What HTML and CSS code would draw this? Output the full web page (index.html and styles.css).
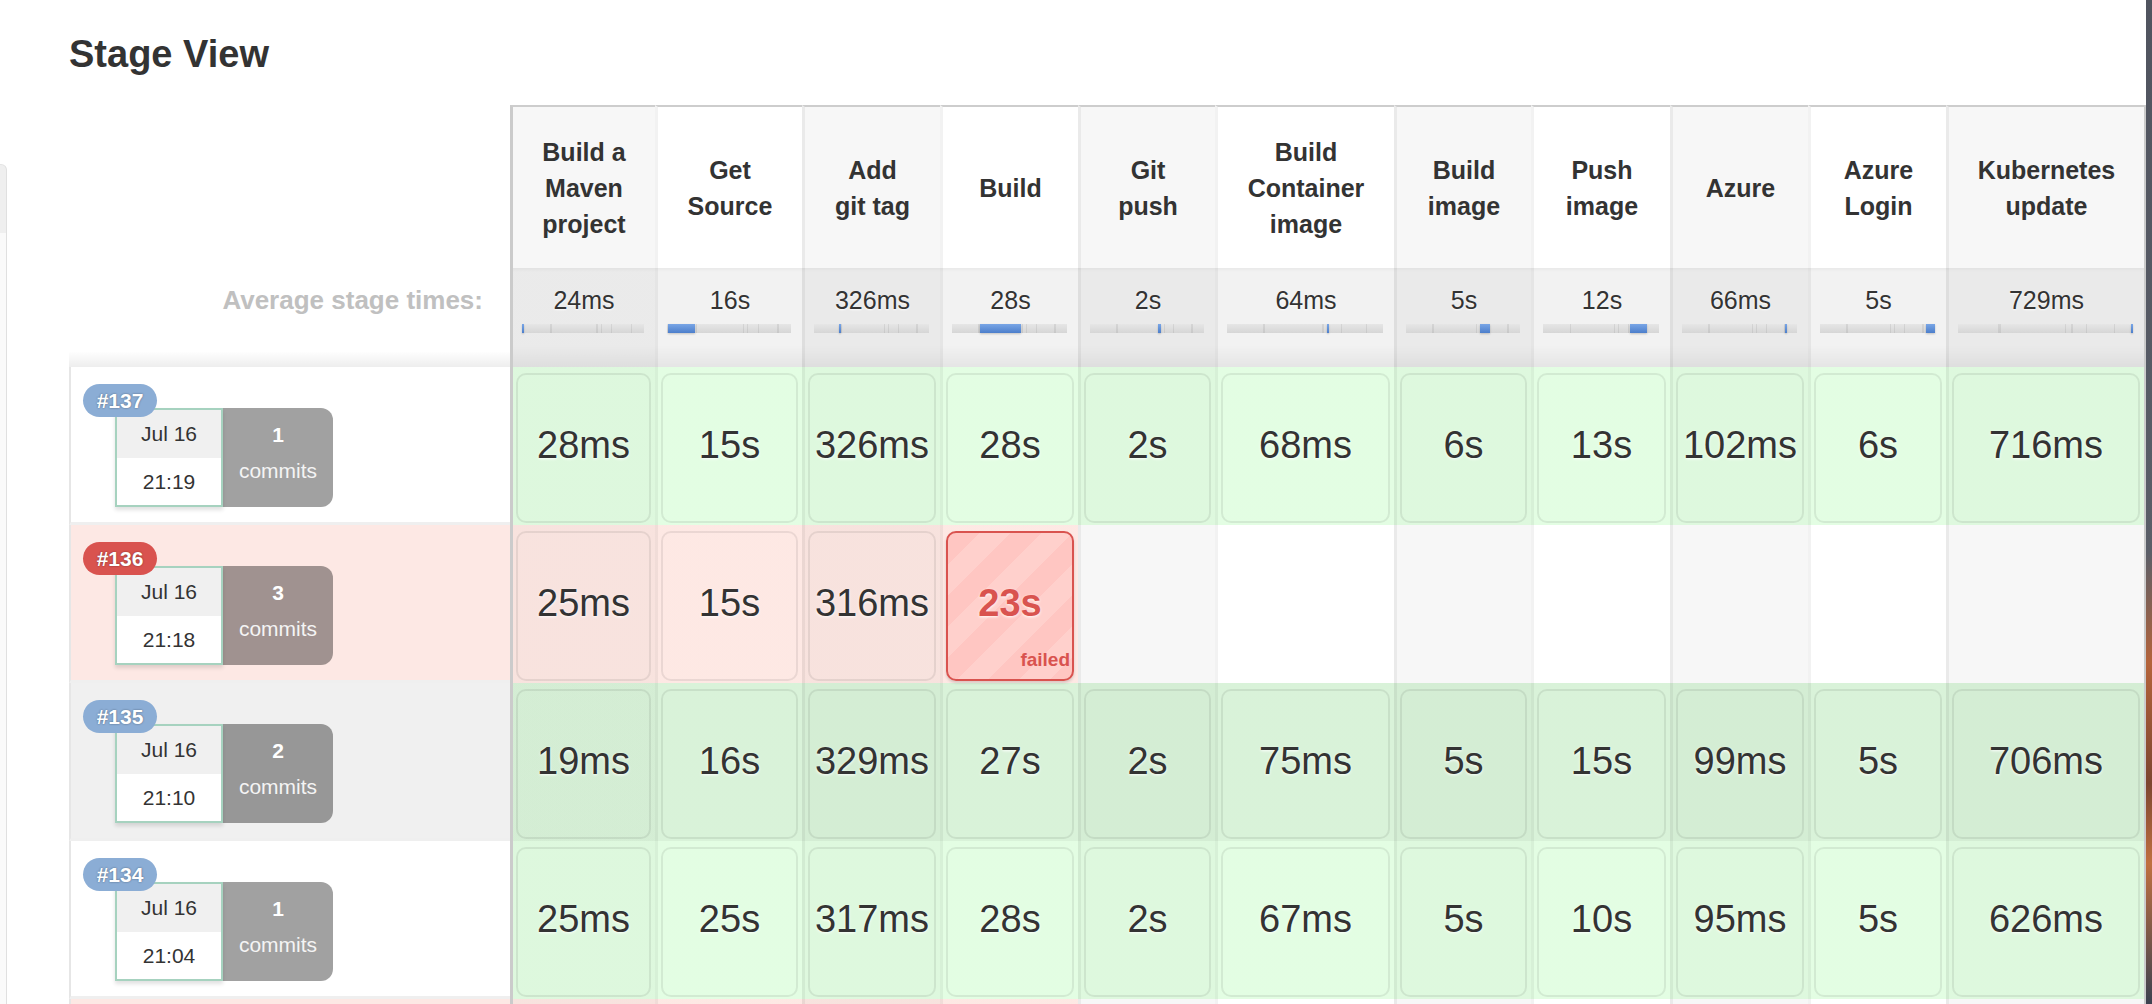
FILE: index.html
```html
<!DOCTYPE html>
<html>
<head>
<meta charset="utf-8">
<title>Stage View</title>
<link rel="stylesheet" href="styles.css">
</head>
<body>
<div class="side"></div>
<main class="main">
  <h2 class="title">Stage View</h2>
  <div class="sv">
    <!-- header row -->
    <div class="lh"></div>
    <div class="hc c1 odd">Build a<br>Maven<br>project</div>
    <div class="hc even">Get<br>Source</div>
    <div class="hc odd">Add<br>git tag</div>
    <div class="hc even">Build</div>
    <div class="hc odd">Git<br>push</div>
    <div class="hc even">Build<br>Container<br>image</div>
    <div class="hc odd">Build<br>image</div>
    <div class="hc even">Push<br>image</div>
    <div class="hc odd">Azure</div>
    <div class="hc even">Azure<br>Login</div>
    <div class="hc odd last">Kubernetes<br>update</div>

    <!-- average row -->
    <div class="la">Average stage times:</div>
    <div class="ac c1 odd"><div class="av">24ms</div><div class="bar"><i style="left:0;width:2px"></i></div></div>
    <div class="ac even"><div class="av">16s</div><div class="bar"><i style="left:0.5%;width:22%"></i></div></div>
    <div class="ac odd"><div class="av">326ms</div><div class="bar"><i style="left:22%;width:2px"></i></div></div>
    <div class="ac even"><div class="av">28s</div><div class="bar"><i style="left:24%;width:36%"></i></div></div>
    <div class="ac odd"><div class="av">2s</div><div class="bar"><i style="left:60%;width:3px"></i></div></div>
    <div class="ac even"><div class="av">64ms</div><div class="bar"><i style="left:64%;width:2px"></i></div></div>
    <div class="ac odd"><div class="av">5s</div><div class="bar"><i style="left:65%;width:9%"></i></div></div>
    <div class="ac even"><div class="av">12s</div><div class="bar"><i style="left:75%;width:15%"></i></div></div>
    <div class="ac odd"><div class="av">66ms</div><div class="bar"><i style="left:89.5%;width:2px"></i></div></div>
    <div class="ac even"><div class="av">5s</div><div class="bar"><i style="left:92%;width:8%"></i></div></div>
    <div class="ac odd last"><div class="av">729ms</div><div class="bar"><i style="left:98.8%;width:2px"></i></div></div>

    <!-- #137 -->
    <div class="lb">
      <div class="binfo">
        <span class="badge">#137</span>
        <div class="date"><div class="d1">Jul 16</div><div class="d2">21:19</div></div>
        <div class="commits"><b>1</b><span>commits</span></div>
      </div>
    </div>
    <div class="bc c1 odd ok"><div class="box">28ms</div></div>
    <div class="bc even ok"><div class="box">15s</div></div>
    <div class="bc odd ok"><div class="box">326ms</div></div>
    <div class="bc even ok"><div class="box">28s</div></div>
    <div class="bc odd ok"><div class="box">2s</div></div>
    <div class="bc even ok"><div class="box">68ms</div></div>
    <div class="bc odd ok"><div class="box">6s</div></div>
    <div class="bc even ok"><div class="box">13s</div></div>
    <div class="bc odd ok"><div class="box">102ms</div></div>
    <div class="bc even ok"><div class="box">6s</div></div>
    <div class="bc odd last ok"><div class="box">716ms</div></div>

    <!-- #136 -->
    <div class="lb bad">
      <div class="binfo">
        <span class="badge red">#136</span>
        <div class="date"><div class="d1">Jul 16</div><div class="d2">21:18</div></div>
        <div class="commits"><b>3</b><span>commits</span></div>
      </div>
    </div>
    <div class="bc c1 odd bad"><div class="box">25ms</div></div>
    <div class="bc even bad"><div class="box">15s</div></div>
    <div class="bc odd bad"><div class="box">316ms</div></div>
    <div class="bc even bad"><div class="box failed"><span class="ft">23s</span><span class="fl">failed</span></div></div>
    <div class="bc odd"></div>
    <div class="bc even"></div>
    <div class="bc odd"></div>
    <div class="bc even"></div>
    <div class="bc odd"></div>
    <div class="bc even"></div>
    <div class="bc odd last"></div>

    <!-- #135 -->
    <div class="lb gray">
      <div class="binfo">
        <span class="badge">#135</span>
        <div class="date"><div class="d1">Jul 16</div><div class="d2">21:10</div></div>
        <div class="commits"><b>2</b><span>commits</span></div>
      </div>
    </div>
    <div class="bc c1 odd okd"><div class="box">19ms</div></div>
    <div class="bc even okd"><div class="box">16s</div></div>
    <div class="bc odd okd"><div class="box">329ms</div></div>
    <div class="bc even okd"><div class="box">27s</div></div>
    <div class="bc odd okd"><div class="box">2s</div></div>
    <div class="bc even okd"><div class="box">75ms</div></div>
    <div class="bc odd okd"><div class="box">5s</div></div>
    <div class="bc even okd"><div class="box">15s</div></div>
    <div class="bc odd okd"><div class="box">99ms</div></div>
    <div class="bc even okd"><div class="box">5s</div></div>
    <div class="bc odd last okd"><div class="box">706ms</div></div>

    <!-- #134 -->
    <div class="lb">
      <div class="binfo">
        <span class="badge">#134</span>
        <div class="date"><div class="d1">Jul 16</div><div class="d2">21:04</div></div>
        <div class="commits"><b>1</b><span>commits</span></div>
      </div>
    </div>
    <div class="bc c1 odd ok"><div class="box">25ms</div></div>
    <div class="bc even ok"><div class="box">25s</div></div>
    <div class="bc odd ok"><div class="box">317ms</div></div>
    <div class="bc even ok"><div class="box">28s</div></div>
    <div class="bc odd ok"><div class="box">2s</div></div>
    <div class="bc even ok"><div class="box">67ms</div></div>
    <div class="bc odd ok"><div class="box">5s</div></div>
    <div class="bc even ok"><div class="box">10s</div></div>
    <div class="bc odd ok"><div class="box">95ms</div></div>
    <div class="bc even ok"><div class="box">5s</div></div>
    <div class="bc odd last ok"><div class="box">626ms</div></div>

    <!-- #133 (cut off) -->
    <div class="lb bad"></div>
    <div class="bc c1 odd bad"></div>
    <div class="bc even bad"></div>
    <div class="bc odd bad"></div>
    <div class="bc even bad"></div>
    <div class="bc odd"></div>
    <div class="bc even"></div>
    <div class="bc odd"></div>
    <div class="bc even"></div>
    <div class="bc odd"></div>
    <div class="bc even"></div>
    <div class="bc odd last"></div>
  </div>
</main>
<div class="desk"></div>
</body>
</html>
```

FILE: styles.css
```css
* { box-sizing: border-box; }
html, body { margin: 0; padding: 0; background: #fff; }
body {
  display: flex;
  width: 2152px;
  height: 1004px;
  overflow: hidden;
  font-family: "Liberation Sans", Arial, Helvetica, sans-serif;
  color: #333;
}

.side {
  flex: 0 0 7px;
  margin-top: 164px;
  border-top: 1px solid #e4e4e4;
  border-right: 1px solid #e0e0e0;
  border-top-right-radius: 6px;
  background: linear-gradient(#efefef 0, #efefef 68px, #fafafa 68px);
}

.main {
  flex: 1;
  min-width: 0;
  padding-left: 62px;
}

.desk {
  flex: 0 0 6px;
  background: linear-gradient(#50545f 0%, #5a5e68 55%, #b4633a 66%, #7d4630 78%, #c07040 86%, #3c4150 100%);
}

.title {
  margin: 0;
  height: 105px;
  padding-top: 32px;
  font-size: 38px;
  line-height: 44px;
  font-weight: bold;
  color: #333;
}

.sv {
  display: grid;
  grid-template-columns: 441px 145px 147px 138px 138px 137px 179px 137px 139px 138px 138px 200px;
  grid-template-rows: 163px 99px repeat(5, 158px);
}

/* column backgrounds and separators */
.odd { background-color: #f7f7f7; }
.even { background-color: #fff; }
.hc, .ac, .bc { border-left: 3px solid rgba(0, 0, 0, 0.05); }
.c1 { border-left: 3px solid #cbcbcb; }
.last { border-right: 2px solid #cbcbcb; }

/* header */
.lh { background: #fff; }
.hc {
  border-top: 2px solid #cdcdcd;
  display: flex;
  align-items: center;
  justify-content: center;
  text-align: center;
  white-space: nowrap;
  font-size: 25px;
  line-height: 36px;
  font-weight: bold;
  color: #333;
}

/* averages */
.la {
  padding: 17px 27px 0 0;
  text-align: right;
  white-space: nowrap;
  font-size: 26px;
  line-height: 30px;
  font-weight: bold;
  color: #c0c0c0;
  background: linear-gradient(to bottom, rgba(0,0,0,0) 84%, rgba(0,0,0,0.07) 100%);
}
.ac {
  padding-top: 17px;
  text-align: center;
  background-image: linear-gradient(to bottom, rgba(0,0,0,0.085) 0, rgba(0,0,0,0.05) 4px, rgba(0,0,0,0.05) 78%, rgba(0,0,0,0.1) 100%);
}
.av {
  font-size: 25px;
  line-height: 30px;
  color: #333;
  text-shadow: 0 1px 2px rgba(255,255,255,0.9);
}
.bar {
  position: relative;
  height: 9px;
  margin: 9px 11px 0 9px;
  background:
    linear-gradient(to right,
      transparent 23%, rgba(0,0,0,0.07) 23%, rgba(0,0,0,0.07) 24.5%, transparent 24.5%,
      transparent 61%, rgba(0,0,0,0.07) 61%, rgba(0,0,0,0.07) 62%, transparent 62%,
      transparent 64.5%, rgba(0,0,0,0.07) 64.5%, rgba(0,0,0,0.07) 65.5%, transparent 65.5%,
      transparent 73%, rgba(0,0,0,0.07) 73%, rgba(0,0,0,0.07) 74%, transparent 74%,
      transparent 89%, rgba(0,0,0,0.07) 89%, rgba(0,0,0,0.07) 90%, transparent 90%),
    linear-gradient(#e6e6e6, #d6d6d6);
}
.bar i {
  position: absolute;
  top: 0;
  bottom: 0;
  background: linear-gradient(#79a6e6, #4c7ecb);
  box-shadow: 0 1px 2px rgba(0,0,0,0.2);
}

/* build info column */
.lb {
  border-left: 2px solid #e6e6e6;
  border-bottom: 3px solid #efefef;
  padding: 41px 0 0 44px;
  background: #fff;
}
.lb.bad { background: #fde8e4; }
.lb.gray { background: #f0f0f0; }

.binfo {
  position: relative;
  display: flex;
}
.badge {
  position: absolute;
  left: -32px;
  top: -24px;
  z-index: 2;
  width: 74px;
  height: 33px;
  border-radius: 17px;
  background: #8badd5;
  color: #fff;
  font-size: 21px;
  line-height: 33px;
  font-weight: bold;
  text-align: center;
  text-shadow: 0 0 2px rgba(0,0,0,0.45);
}
.badge.red { background: #d9534f; }

.date {
  flex: 0 0 108px;
  height: 99px;
  border: 2px solid #a6d2bf;
  background: #fff;
  display: flex;
  flex-direction: column;
  font-size: 21px;
  white-space: nowrap;
  color: #333;
  box-shadow: 0 3px 4px rgba(0,0,0,0.12);
}
.d1 {
  height: 48px;
  background: #f0f0f0;
  display: flex;
  align-items: center;
  justify-content: center;
}
.d2 {
  flex: 1;
  display: flex;
  align-items: center;
  justify-content: center;
}
.commits {
  flex: 0 0 110px;
  height: 99px;
  padding-top: 10px;
  background: rgba(0,0,0,0.37);
  border-radius: 0 12px 12px 0;
  color: #fff;
  text-align: center;
  font-size: 21px;
}
.commits b { display: block; line-height: 34px; }
.commits span { display: block; line-height: 38px; color: #f4f4f4; }

/* stage cells */
.bc { padding: 6px 4px 2px 3px; }
.ok { background-image: linear-gradient(rgba(170,250,170,0.33), rgba(170,250,170,0.33)); }
.okd { background-image: linear-gradient(rgba(0,0,0,0.045), rgba(0,0,0,0.045)), linear-gradient(rgba(170,250,170,0.33), rgba(170,250,170,0.33)); }
.bad { background-image: linear-gradient(rgba(250,180,165,0.3), rgba(250,180,165,0.3)); }

.box {
  position: relative;
  height: 150px;
  border: 2px solid rgba(0,0,0,0.075);
  border-radius: 10px;
  display: flex;
  align-items: center;
  justify-content: center;
  padding-bottom: 6px;
  font-size: 38px;
  color: #333;
  white-space: nowrap;
  text-shadow: 0 1px 3px rgba(255,255,255,0.95);
}
.box.failed {
  border: 2px solid #d9534f;
  background: repeating-linear-gradient(135deg, #ffc6c2 0, #ffc6c2 22px, #ffd0cc 22px, #ffd0cc 44px);
  box-shadow: 0 2px 3px rgba(0,0,0,0.15);
}
.ft {
  color: #d9534f;
  font-weight: bold;
}
.fl {
  position: absolute;
  right: 2px;
  bottom: 9px;
  font-size: 19px;
  line-height: 20px;
  font-weight: bold;
  color: #d9534f;
  text-shadow: none;
}
```
